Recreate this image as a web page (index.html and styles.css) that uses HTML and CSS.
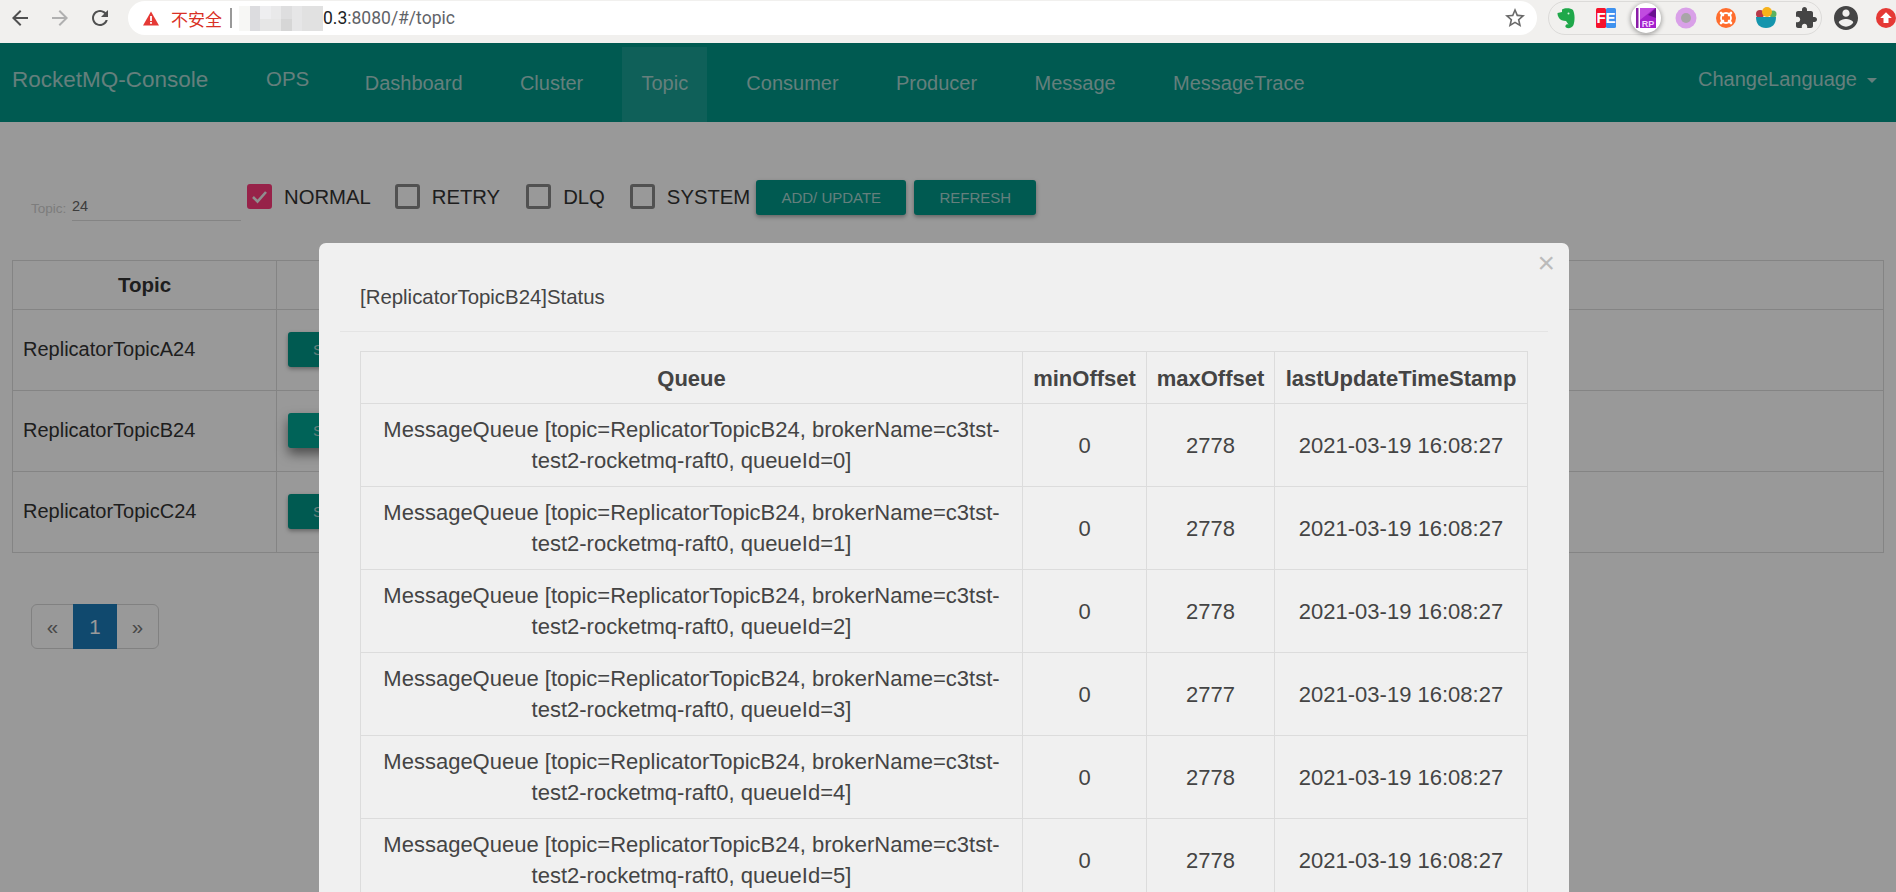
FILE: index.html
```html
<!DOCTYPE html>
<html lang="en">
<head>
<meta charset="utf-8">
<title>RocketMQ-Console</title>
<link rel="stylesheet" href="styles.css">
</head>
<body>
<header class="toolbar">
  <div class="tb-buttons">
    <svg class="tb-ico" viewBox="0 0 24 24"><path fill="#505050" d="M20 11H7.830l5.590-5.590L12 4l-8 8 8 8 1.410-1.410L7.830 13H20v-2z"/></svg>
    <svg class="tb-ico" viewBox="0 0 24 24"><path fill="#b0b0b0" d="M4 11h12.170l-5.590-5.590L12 4l8 8-8 8-1.410-1.410L16.170 13H4v-2z"/></svg>
    <svg class="tb-ico" viewBox="0 0 24 24"><path fill="#505050" d="M17.650 6.350C16.200 4.900 14.210 4 12 4c-4.420 0-7.990 3.580-7.990 8s3.570 8 7.990 8c3.730 0 6.840-2.550 7.730-6h-2.080c-.82 2.330-3.040 4-5.650 4-3.310 0-6-2.690-6-6s2.690-6 6-6c1.660 0 3.140.69 4.220 1.780L13 11h7V4l-2.350 2.350z"/></svg>
  </div>
  <div class="omnibox">
    <svg class="warn" viewBox="0 0 16 15"><path fill="#e53935" d="M8 0.500 16 14.500H0z"/><rect fill="#fff" x="7.100" y="5" width="1.800" height="5"/><rect fill="#fff" x="7.100" y="11" width="1.800" height="1.800"/></svg>
    <span class="insecure">不安全</span>
    <span class="sep"></span>
    <svg class="mosaic" viewBox="0 0 84 25">
      <rect width="84" height="25" fill="#f7f7f5"/>
      <rect x="11" width="10" height="25" fill="#dcdcdf"/><rect x="21" width="11" height="25" fill="#eeeef0"/><rect x="32" width="10" height="25" fill="#e9e9ea"/><rect x="42" width="11" height="25" fill="#dededf"/><rect x="53" width="10" height="25" fill="#e6e6e7"/><rect x="63" width="21" height="25" fill="#e1e1e1"/>
      <rect x="21" y="13" width="21" height="12" fill="#e6e6e6"/><rect x="42" y="13" width="11" height="12" fill="#d6d6d6"/>
    </svg>
    <span class="url"><span class="url-host">0.3</span>:8080/#/topic</span>
    <svg class="star" viewBox="0 0 24 24"><path fill="#6a6a6a" d="M22 9.240l-7.190-.62L12 2 9.190 8.630 2 9.240l5.460 4.730L5.820 21 12 17.270 18.180 21l-1.630-7.030L22 9.240zM12 15.400l-3.760 2.270 1-4.280-3.320-2.880 4.380-.38L12 6.100l1.710 4.040 4.380.38-3.320 2.880 1 4.280L12 15.400z"/></svg>
  </div>
  <div class="ext-pill">
    <svg class="ext" viewBox="0 0 24 24"><path fill="#1fa84a" d="M3.500 7 8 6 8 3.500C11 1.500 17 2 19 4c2 4 2 11 .5 15-1 3-5.500 4-7.500 2.500-1.500-1.500 0-4 3-3-1-.5-2-2-3-3.500-3 0-6-1-7-3-1-1.500-1.500-3-1.500-5z"/><circle cx="14.500" cy="7.500" r="1" fill="#d8f3df"/></svg>
    <svg class="ext" viewBox="0 0 24 24"><rect x="2" y="2" width="10" height="20" rx="1.500" fill="#f5132c"/><rect x="12" y="2" width="10" height="20" rx="1.500" fill="#3f92ee"/><text class="fe-text" x="12" y="17" text-anchor="middle">FE</text></svg>
    <span class="ext-rp"><svg class="rp-art" viewBox="0 0 20 20"><rect width="2.500" height="20" fill="#8a1ea8"/><path fill="#a320cc" d="M4 0h16v20H4z"/><path fill="#c14be0" d="M4 0h15L4 12z"/><path fill="#6a1290" d="M20 0v10L12 7z"/><text class="rp-text" x="12" y="18.500" text-anchor="middle">RP</text></svg></span>
    <svg class="ext" viewBox="0 0 24 24"><circle cx="12" cy="12" r="10.500" fill="#d9a0e8"/><circle cx="12" cy="12" r="5" fill="#a8a5a8"/></svg>
    <svg class="ext" viewBox="0 0 24 24"><circle cx="12" cy="12" r="10" fill="#ff6d2d"/><circle cx="12" cy="12" r="5" fill="none" stroke="#fff" stroke-width="1.800"/><path stroke="#fff" stroke-width="2.600" stroke-linecap="round" d="M7 7l2 2M17 7l-2 2M7 17l2-2M17 17l-2-2"/></svg>
    <svg class="ext" viewBox="0 0 24 24"><circle cx="6" cy="8" r="4" fill="#b63a4a"/><circle cx="19" cy="8" r="3.500" fill="#59b260"/><circle cx="13" cy="6" r="5" fill="#f6b21b"/><path fill="#1495ad" d="M2 11h20c0 7-3.500 11-10 11S2 18 2 11z"/></svg>
    <svg class="ext" viewBox="0 0 24 24"><path fill="#454545" d="M20.500 11H19V7c0-1.100-.9-2-2-2h-4V3.500C13 2.120 11.880 1 10.500 1S8 2.120 8 3.500V5H4c-1.100 0-1.990.9-1.990 2v3.800H3.500c1.490 0 2.700 1.210 2.700 2.700s-1.210 2.700-2.700 2.700H2V20c0 1.100.9 2 2 2h3.800v-1.500c0-1.490 1.210-2.700 2.700-2.700 1.490 0 2.700 1.210 2.700 2.700V22H17c1.100 0 2-.9 2-2v-4h1.500c1.380 0 2.500-1.120 2.500-2.500S21.880 11 20.500 11z"/></svg>
  </div>
  <svg class="avatar" viewBox="2 2 20 20"><path fill="#454545" d="M12 2C6.480 2 2 6.480 2 12s4.480 10 10 10 10-4.480 10-10S17.520 2 12 2zm0 3c1.660 0 3 1.340 3 3s-1.340 3-3 3-3-1.340-3-3 1.340-3 3-3zm0 14.200c-2.500 0-4.710-1.280-6-3.220.03-1.990 4-3.080 6-3.080 1.990 0 5.970 1.090 6 3.080-1.290 1.940-3.500 3.220-6 3.220z"/></svg>
  <svg class="update" viewBox="0 0 24 24"><circle cx="12" cy="12" r="12" fill="#e53935"/><path fill="#fff" d="M12 5l7 7h-4v6H9v-6H5z"/></svg>
</header>

<nav class="navbar">
  <a class="brand">RocketMQ-Console</a>
  <a class="nav-ops">OPS</a>
  <ul class="nav-list">
    <li class="nav-item">Dashboard</li>
    <li class="nav-item">Cluster</li>
    <li class="nav-item is-active">Topic</li>
    <li class="nav-item">Consumer</li>
    <li class="nav-item">Producer</li>
    <li class="nav-item">Message</li>
    <li class="nav-item">MessageTrace</li>
  </ul>
  <a class="nav-lang">ChangeLanguage<span class="caret"></span></a>
</nav>

<main class="content">
  <div class="filters">
    <label class="topic-field"><span class="topic-label">Topic:</span><span class="topic-input">24</span></label>
    <label class="check check-first"><span class="box is-checked"><svg viewBox="0 0 25 25"><path fill="none" stroke="#eee" stroke-width="2.600" d="M6 13l4.500 4.500L19 8"/></svg></span>NORMAL</label>
    <label class="check check-retry"><span class="box"></span>RETRY</label>
    <label class="check"><span class="box"></span>DLQ</label>
    <label class="check check-last"><span class="box"></span>SYSTEM</label>
    <button class="btn btn-add">ADD/ UPDATE</button>
    <button class="btn btn-refresh">REFRESH</button>
  </div>
  <table class="topics">
    <thead><tr><th class="col-topic">Topic</th><th></th></tr></thead>
    <tbody>
      <tr><td>ReplicatorTopicA24</td><td><button class="btn btn-row">STATUS</button></td></tr>
      <tr><td>ReplicatorTopicB24</td><td><button class="btn btn-row is-hover">STATUS</button></td></tr>
      <tr><td>ReplicatorTopicC24</td><td><button class="btn btn-row">STATUS</button></td></tr>
    </tbody>
  </table>
  <ul class="pager">
    <li class="pager-item">«</li>
    <li class="pager-item is-current">1</li>
    <li class="pager-item">»</li>
  </ul>
</main>

<div class="overlay">
  <section class="modal">
    <span class="close">×</span>
    <h4 class="modal-title">[ReplicatorTopicB24]Status</h4>
    <div class="modal-body">
      <table class="queues">
        <thead><tr><th class="q-queue">Queue</th><th class="q-min">minOffset</th><th class="q-max">maxOffset</th><th>lastUpdateTimeStamp</th></tr></thead>
        <tbody>
          <tr><td>MessageQueue [topic=ReplicatorTopicB24, brokerName=c3tst-test2-rocketmq-raft0, queueId=0]</td><td>0</td><td>2778</td><td>2021-03-19 16:08:27</td></tr>
          <tr><td>MessageQueue [topic=ReplicatorTopicB24, brokerName=c3tst-test2-rocketmq-raft0, queueId=1]</td><td>0</td><td>2778</td><td>2021-03-19 16:08:27</td></tr>
          <tr><td>MessageQueue [topic=ReplicatorTopicB24, brokerName=c3tst-test2-rocketmq-raft0, queueId=2]</td><td>0</td><td>2778</td><td>2021-03-19 16:08:27</td></tr>
          <tr><td>MessageQueue [topic=ReplicatorTopicB24, brokerName=c3tst-test2-rocketmq-raft0, queueId=3]</td><td>0</td><td>2777</td><td>2021-03-19 16:08:27</td></tr>
          <tr><td>MessageQueue [topic=ReplicatorTopicB24, brokerName=c3tst-test2-rocketmq-raft0, queueId=4]</td><td>0</td><td>2778</td><td>2021-03-19 16:08:27</td></tr>
          <tr><td>MessageQueue [topic=ReplicatorTopicB24, brokerName=c3tst-test2-rocketmq-raft0, queueId=5]</td><td>0</td><td>2778</td><td>2021-03-19 16:08:27</td></tr>
        </tbody>
      </table>
    </div>
  </section>
</div>
</body>
</html>
```
FILE: styles.css
```css
* { box-sizing: border-box; }
html, body { margin: 0; height: 892px; overflow: hidden; background: #fff; }
body { position: relative; font-family: "Liberation Sans", Arial, sans-serif; color: #333; }
ul { list-style: none; margin: 0; padding: 0; }

/* browser toolbar */
.toolbar { display: flex; align-items: flex-start; height: 43px; background: #f1f0ee; }
.tb-buttons { display: flex; gap: 16px; padding: 6px 16px 0 8px; }
.tb-ico { width: 24px; height: 24px; display: block; }
.omnibox { flex: 1; display: flex; align-items: center; height: 34px; margin-top: 1px; background: #fff; border-radius: 17px; padding-left: 15px; font-family: Roboto, "Noto Sans CJK SC", sans-serif; font-size: 17.500px; }
.warn { width: 16px; height: 15px; margin-right: 12px; }
.insecure { color: #d93025; font-family: "Noto Sans CJK SC", sans-serif; font-size: 17px; width: 52px; white-space: nowrap; }
.sep { width: 2px; height: 20px; background: #999; margin: 0 7px 0 7px; }
.mosaic { width: 84px; height: 25px; display: block; }
.url { color: #5f6368; white-space: nowrap; }
.url-host { color: #202124; }
.star { width: 24px; height: 24px; margin-left: auto; margin-right: 10px; }
.ext-pill { display: flex; align-items: center; gap: 16px; width: 274px; height: 34px; margin: 1px 0 0 11px; padding-left: 5px; border: 1px solid #dcdbd9; border-radius: 17px; flex: none; }
.ext { width: 24px; height: 24px; display: block; flex: none; }
.ext-rp { flex: none; display: flex; align-items: center; justify-content: center; width: 30px; height: 30px; margin: 0 -3px; border-radius: 50%; background: #fff; box-shadow: 0 1px 4px 1px rgba(0,0,0,.3); }
.rp-art { width: 20px; height: 20px; display: block; }
.fe-text { font: bold 15px "Liberation Sans", sans-serif; fill: #fff; }
.rp-text { font: bold 9px "Liberation Sans", sans-serif; fill: #f3d4ff; }
.avatar { width: 24px; height: 24px; margin: 6px 0 0 12px; flex: none; }
.update { width: 20px; height: 20px; margin: 8px 0 0 18px; flex: none; }

/* app navbar */
.navbar { display: flex; align-items: stretch; height: 79px; background: #009688; color: #a8d4cf; font-size: 20px; }
.brand { padding: 24px 0 0 12px; width: 266px; font-size: 22.500px; }
.nav-ops { padding-top: 24px; width: 70px; font-size: 20.500px; }
.nav-list { display: flex; }
.nav-item { padding: 29px 28.700px 0; }
.nav-item.is-active { background: rgba(255,255,255,.1); margin: 4px 10.500px 0; padding: 25px 19px 0; }
.nav-lang { margin-left: auto; padding: 25px 19px 0 0; }
.caret { display: inline-block; margin-left: 10px; border-left: 5px solid transparent; border-right: 5px solid transparent; border-top: 5px solid #a8d4cf; vertical-align: middle; }

/* page */
.content { padding: 58px 12px 0; }
.filters { display: flex; align-items: flex-start; height: 39px; padding-left: 19px; }
.topic-field { display: flex; width: 210px; height: 40px; margin: 1px 6px 0 0; align-items: flex-end; flex: none; }
.topic-label { font-size: 13.500px; color: #d0d0d0; width: 41px; padding-bottom: 5px; }
.topic-input { width: 169px; height: 40px; padding: 17px 0 0; border-bottom: 1px solid #ddd; font-size: 14.500px; color: #666; }
.check { display: flex; align-items: flex-start; height: 25px; line-height: 27px; margin-top: 4px; margin-right: 25px; font-size: 20.300px; color: #333; white-space: nowrap; }
.check-first { margin-right: 24px; }
.check-retry { margin-right: 26px; }
.check-last { margin-right: 6px; }
.box { width: 25px; height: 25px; border: 3px solid #888; border-radius: 3px; margin-right: 12px; flex: none; display: block; }
.box svg { display: block; margin: -3px; width: 25px; height: 25px; }
.box.is-checked { background: #fc3a7b; border-color: #fc3a7b; }
.btn { height: 35px; border: 0; border-radius: 3px; background: #009688; color: #a8d4cf; font-family: inherit; font-size: 15px; padding: 0; box-shadow: 0 2px 4px rgba(0,0,0,.35); }
.btn-add { width: 150px; margin-right: 8px; flex: none; }
.btn-refresh { width: 122px; flex: none; }

.topics { width: 1872px; margin-top: 41px; border-collapse: collapse; table-layout: fixed; font-size: 20px; color: #333; }
.topics th, .topics td { border: 1px solid #ddd; padding: 0 10px; text-align: left; }
.topics thead th { height: 49px; text-align: center; font-weight: bold; font-size: 20.500px; }
.topics tbody td { height: 81px; padding-bottom: 2px; }
.col-topic { width: 264px; }
.btn-row { width: 120px; height: 35px; margin-left: 1px; text-align: left; padding-left: 25px; }
.btn-row.is-hover { background: #00a593; box-shadow: 0 6px 12px rgba(0,0,0,.5); }

.pager { display: flex; margin: 51px 0 0 19px; width: 128px; height: 45px; border: 1px solid #d8d8d8; border-radius: 6px; font-size: 20.500px; color: #777; }
.pager-item { display: flex; align-items: center; justify-content: center; width: 41px; }
.pager-item.is-current { width: 44px; margin: -1px 0; background: #1b7ab8; color: #fff; }

/* modal layer */
.overlay { position: absolute; inset: 43px 0 0; background: rgba(0,0,0,.4); overflow: hidden; }
.modal { position: absolute; left: 319px; top: 200px; width: 1250px; height: 800px; background: #f0f0f0; border-radius: 7px; color: #444; }
.close { position: absolute; right: 14px; top: 2px; font-size: 30px; line-height: 36px; color: #bbb; }
.modal-title { margin: 0 21px; height: 89px; padding: 42px 0 0 20px; font-size: 20.400px; line-height: 24px; font-weight: normal; border-bottom: 1px solid #e4e4e4; }
.modal-body { padding: 19px 41px 0; }
.queues { width: 1168px; border-collapse: collapse; table-layout: fixed; font-size: 22px; line-height: 31px; text-align: center; }
.queues th, .queues td { border: 1px solid #dcdcdc; padding: 10px 10px; }
.queues thead th { height: 52px; padding: 2px 0 0; }
.q-queue { width: 662px; }
.q-min { width: 124px; }
.q-max { width: 128px; }
```
